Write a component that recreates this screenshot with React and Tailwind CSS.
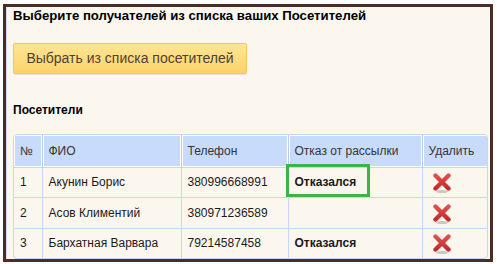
import React from "react";

const visitors = [
  { id: 1, name: "Акунин Борис", phone: "380996668991", refused: true, marked: true },
  { id: 2, name: "Асов Климентий", phone: "380971236589", refused: false },
  { id: 3, name: "Бархатная Варвара", phone: "79214587458", refused: true },
];

const DeleteIcon = () => (
  <svg width="20" height="20" viewBox="0 0 20 20">
    <defs>
      <linearGradient id="xg" x1="0" y1="0" x2="0" y2="1">
        <stop offset="0" stopColor="#e0504e" />
        <stop offset="1" stopColor="#c42a2c" />
      </linearGradient>
    </defs>
    <ellipse cx="10" cy="18.5" rx="6" ry="1.6" fill="#b9b3ad" opacity="0.7" />
    <path d="M3.5 2.5 L16.5 15.5 M16.5 2.5 L3.5 15.5" stroke="url(#xg)" strokeWidth="4.4" strokeLinecap="round" />
  </svg>
);

const App = () => {
  return (
    <div className="w-[497px] h-[264px] bg-white pt-[4px] pl-[3px] font-['Liberation_Sans',Arial,sans-serif]">
      <div className="w-[490px] h-[258px] border-[3px] border-[#4b2d26] bg-[#fbf7ef]">
        <div className="h-full border-l border-[#d3dcef] pl-[6px] pt-[1px]">
          <h2 className="text-[13.2px] leading-[15px] font-bold text-black">
            Выберите получателей из списка ваших Посетителей
          </h2>

          <button className="mt-[20px] w-[234px] h-[31px] rounded-[2px] border border-[#f1c85f] bg-gradient-to-b from-[#ffe594] to-[#fcd36a] text-[14px] text-[#4d3f31] shadow-[0_1px_1px_rgba(0,0,0,0.08)]">
            Выбрать из списка посетителей
          </button>

          <h3 className="mt-[29px] text-[12px] leading-[14px] font-bold text-black">Посетители</h3>

          <div className="mt-[17px] w-[475px] border border-[#c4d7f6] rounded-[4px] overflow-hidden">
            <table className="w-full table-fixed border-collapse text-[12px] text-[#1a1a1a]">
              <colgroup>
                <col className="w-[28px]" />
                <col className="w-[139px]" />
                <col className="w-[107px]" />
                <col className="w-[134px]" />
                <col className="w-[66px]" />
              </colgroup>
              <thead>
                <tr className="h-[32px] bg-[#c9dbfa] text-[#333] text-left">
                  <th className="font-normal pl-[6px] border-r border-[#b7cdf2] shadow-[inset_0_0_0_1px_#fff]">№</th>
                  <th className="font-normal pl-[6px] border-r border-[#b7cdf2] shadow-[inset_0_0_0_1px_#fff]">ФИО</th>
                  <th className="font-normal pl-[6px] border-r border-[#b7cdf2] shadow-[inset_0_0_0_1px_#fff]">Телефон</th>
                  <th className="font-normal pl-[6px] border-r border-[#b7cdf2] shadow-[inset_0_0_0_1px_#fff]">Отказ от рассылки</th>
                  <th className="font-normal pl-[6px] shadow-[inset_0_0_0_1px_#fff]">Удалить</th>
                </tr>
              </thead>
              <tbody>
                {visitors.map((v, i) => (
                  <tr key={v.id} className={`${i === 1 ? "h-[31px]" : "h-[30px]"} border-t border-[#c4d7f6]`}>
                    <td className="pl-[6px] border-r border-[#c4d7f6]">{v.id}</td>
                    <td className="pl-[6px] border-r border-[#c4d7f6]">{v.name}</td>
                    <td className="pl-[6px] border-r border-[#c4d7f6]">{v.phone}</td>
                    <td className="pl-[6px] border-r border-[#c4d7f6] font-bold relative">
                      {v.refused ? "Отказался" : ""}
                      {v.marked && (
                        <div className="absolute left-[-3px] top-[-4px] w-[84px] h-[33px] border-[3px] border-[#3bb44a]" />
                      )}
                    </td>
                    <td className="pl-[9px]">
                      <div className="pt-[2px]">
                        <DeleteIcon />
                      </div>
                    </td>
                  </tr>
                ))}
              </tbody>
            </table>
          </div>
        </div>
      </div>
    </div>
  );
};

export default App;
